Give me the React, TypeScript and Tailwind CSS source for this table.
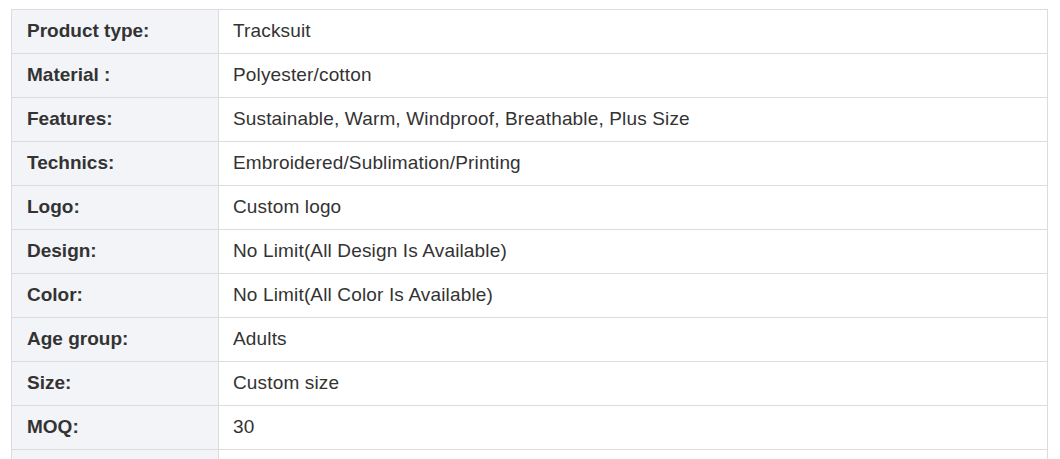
const rows: [string, string][] = [
  ['Product type:', 'Tracksuit'],
  ['Material :', 'Polyester/cotton'],
  ['Features:', 'Sustainable, Warm, Windproof, Breathable, Plus Size'],
  ['Technics:', 'Embroidered/Sublimation/Printing'],
  ['Logo:', 'Custom logo'],
  ['Design:', 'No Limit(All Design Is Available)'],
  ['Color:', 'No Limit(All Color Is Available)'],
  ['Age group:', 'Adults'],
  ['Size:', 'Custom size'],
  ['MOQ:', '30'],
  ['', ''],
]

export default function App() {
  return (
    <div className="h-[459px] overflow-hidden bg-white pl-[11px] pt-[9px] font-['Liberation_Sans',Arial,sans-serif] text-[19px] text-[#333]">
      <table className="w-[1037px] border-collapse">
        <tbody>
          {rows.map(([label, value], i) => (
            <tr key={i} className="h-[44px]">
              <td className="w-[207px] border border-[#dcdcdc] bg-[#f3f4f7] px-[15px] font-bold">{label}</td>
              <td className="border border-[#dcdcdc] px-[14px] tracking-[0.15px]">{value}</td>
            </tr>
          ))}
        </tbody>
      </table>
    </div>
  )
}
